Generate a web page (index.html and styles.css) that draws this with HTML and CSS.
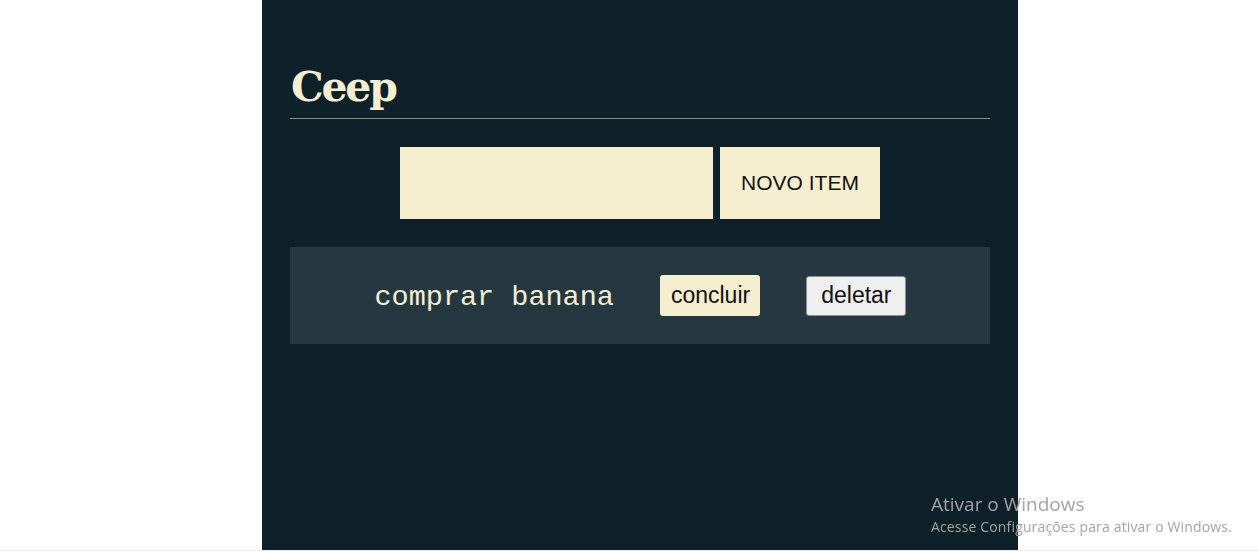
FILE: index.html
```html
<!DOCTYPE html>
<html lang="pt-BR">
<head>
<meta charset="utf-8">
<title>Ceep</title>
<link rel="stylesheet" href="styles.css">
</head>
<body>
<main class="app">
  <header class="header">
    <h1 class="title">Ceep</h1>
  </header>
  <form class="form">
    <input class="form-input" type="text">
    <button class="form-button" type="button">NOVO ITEM</button>
  </form>
  <ul class="list">
    <li class="task">
      <p class="task-text">comprar banana</p>
      <button class="btn-done" type="button">concluir</button>
      <button class="btn-delete" type="button">deletar</button>
    </li>
  </ul>
</main>
<div class="watermark">
  <p class="wm-title">Ativar o Windows</p>
  <p class="wm-sub">Acesse Configurações para ativar o Windows.</p>
</div>
</body>
</html>
```
FILE: styles.css
```css
* { box-sizing: border-box; }
html, body { margin: 0; padding: 0; }
body {
  background: #ffffff;
  height: 552px;
  overflow: hidden;
}
.app {
  margin-left: 262px;
  width: 756px;
  height: 550px;
  background: #0e2029;
  padding: 56px 28px 0;
}
body::after {
  content: "";
  display: block;
  height: 1px;
  background: #ececec;
}
.header {
  border-bottom: 1px solid #8a8a7e;
}
.title {
  margin: 0;
  font-family: "DejaVu Serif", serif;
  font-weight: bold;
  font-size: 41px;
  letter-spacing: -2.2px;
  line-height: 62px;
  color: #f5efd0;
  padding-left: 1px;
}
.form {
  display: flex;
  justify-content: center;
  gap: 7px;
  margin-top: 28px;
}
.form-input {
  width: 313px;
  height: 72px;
  border: 0;
  background: #f5efd0;
  margin: 0;
}
.form-button {
  width: 160px;
  height: 72px;
  border: 0;
  background: #f5efd0;
  font-family: "Liberation Sans", Arial, sans-serif;
  font-size: 21px;
  color: #111;
  margin: 0;
  padding: 0;
}
.list {
  list-style: none;
  margin: 28px 0 0;
  padding: 0;
}
.task {
  height: 97px;
  background: #253740;
  display: flex;
  justify-content: center;
  align-items: center;
  gap: 46px;
}
.task-text {
  margin: 4px 0 0;
  font-family: "Liberation Mono", monospace;
  font-size: 28.5px;
  color: #f5efd0;
}
.btn-done, .btn-delete {
  font-family: "Liberation Sans", Arial, sans-serif;
  font-size: 23px;
  height: 41px;
  border-radius: 3px;
  color: #111;
  margin: 0;
}
.btn-done {
  background: #f5efd0;
  border: 0;
  padding: 0 10px 0 11px;
}
.btn-delete {
  background: #efefef;
  border: 1px solid #8f8f8f;
  height: 40px;
  padding: 0 13px 0 14px;
}
.watermark {
  position: fixed;
  left: 931px;
  top: 492px;
  font-family: "Open Sans", "Noto Sans", sans-serif;
  color: #a3a3a3;
}
.wm-title { margin: 0; font-size: 19px; line-height: 24px; }
.wm-sub { margin: 0; font-size: 14px; letter-spacing: 0.15px; line-height: 22px; }
```
